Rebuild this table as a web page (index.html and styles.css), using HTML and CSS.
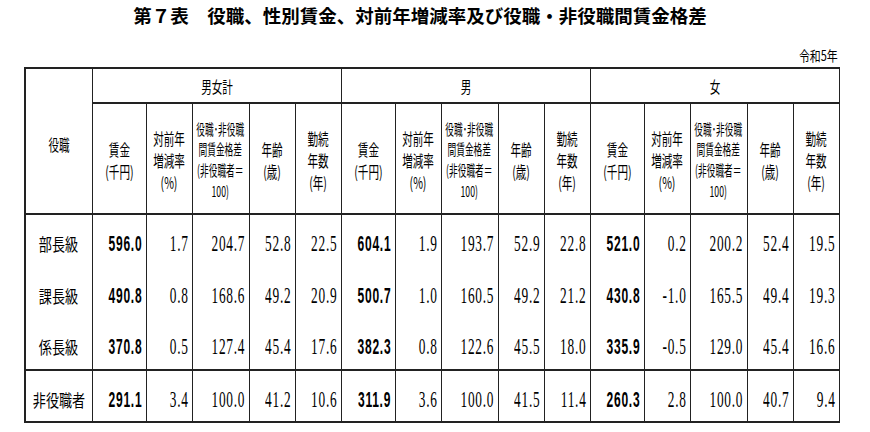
FILE: index.html
```html
<!DOCTYPE html>
<html lang="ja">
<head>
<meta charset="utf-8">
<title>第７表　役職、性別賃金、対前年増減率及び役職・非役職間賃金格差</title>
<link rel="stylesheet" href="styles.css">
</head>
<body>
<div class="page">
  <h1 class="title">第７表　役職、性別賃金、対前年増減率及び役職・非役職間賃金格差</h1>
  <div class="unit"><span>令和5年</span></div>
  <table class="wage">
    <colgroup>
      <col class="c-role">
      <col class="c-w"><col class="c-r"><col class="c-g"><col class="c-a"><col class="c-y">
      <col class="c-w"><col class="c-r"><col class="c-g"><col class="c-a"><col class="c-y">
      <col class="c-w"><col class="c-r"><col class="c-g"><col class="c-a"><col class="c-y">
    </colgroup>
    <thead>
      <tr class="r-group">
        <th rowspan="2" class="role-h"><div class="hc"><span class="sq">役職</span></div></th>
        <th colspan="5"><div class="hc"><span class="sq grp">男女計</span></div></th>
        <th colspan="5"><div class="hc"><span class="sq grp">男</span></div></th>
        <th colspan="5"><div class="hc"><span class="sq grp">女</span></div></th>
      </tr>
      <tr class="r-sub">
        <th><div class="hc"><span class="sq">賃金<br>(千円)</span></div></th>
        <th><div class="hc"><span class="sq">対前年<br>増減率<br>(%)</span></div></th>
        <th><div class="hc"><span class="sq tight">役職･非役職<br>間賃金格差<br>(非役職者＝<br>100)</span></div></th>
        <th><div class="hc"><span class="sq">年齢<br>(歳)</span></div></th>
        <th><div class="hc"><span class="sq">勤続<br>年数<br>(年)</span></div></th>
        <th><div class="hc"><span class="sq">賃金<br>(千円)</span></div></th>
        <th><div class="hc"><span class="sq">対前年<br>増減率<br>(%)</span></div></th>
        <th><div class="hc"><span class="sq tight">役職･非役職<br>間賃金格差<br>(非役職者＝<br>100)</span></div></th>
        <th><div class="hc"><span class="sq">年齢<br>(歳)</span></div></th>
        <th><div class="hc"><span class="sq">勤続<br>年数<br>(年)</span></div></th>
        <th><div class="hc"><span class="sq">賃金<br>(千円)</span></div></th>
        <th><div class="hc"><span class="sq">対前年<br>増減率<br>(%)</span></div></th>
        <th><div class="hc"><span class="sq tight">役職･非役職<br>間賃金格差<br>(非役職者＝<br>100)</span></div></th>
        <th><div class="hc"><span class="sq">年齢<br>(歳)</span></div></th>
        <th><div class="hc"><span class="sq">勤続<br>年数<br>(年)</span></div></th>
      </tr>
    </thead>
    <tbody>
      <tr class="r-data r-first">
        <td class="lab"><div class="hc"><span class="lb">部長級</span></div></td>
        <td><div class="nc"><span class="b">596.0</span></div></td>
        <td><div class="nc"><span class="d">1.7</span></div></td>
        <td><div class="nc"><span class="d">204.7</span></div></td>
        <td><div class="nc"><span class="d">52.8</span></div></td>
        <td><div class="nc"><span class="d">22.5</span></div></td>
        <td><div class="nc"><span class="b">604.1</span></div></td>
        <td><div class="nc"><span class="d">1.9</span></div></td>
        <td><div class="nc"><span class="d">193.7</span></div></td>
        <td><div class="nc"><span class="d">52.9</span></div></td>
        <td><div class="nc"><span class="d">22.8</span></div></td>
        <td><div class="nc"><span class="b">521.0</span></div></td>
        <td><div class="nc"><span class="d">0.2</span></div></td>
        <td><div class="nc"><span class="d">200.2</span></div></td>
        <td><div class="nc"><span class="d">52.4</span></div></td>
        <td><div class="nc"><span class="d">19.5</span></div></td>
      </tr>
      <tr class="r-data">
        <td class="lab"><div class="hc"><span class="lb">課長級</span></div></td>
        <td><div class="nc"><span class="b">490.8</span></div></td>
        <td><div class="nc"><span class="d">0.8</span></div></td>
        <td><div class="nc"><span class="d">168.6</span></div></td>
        <td><div class="nc"><span class="d">49.2</span></div></td>
        <td><div class="nc"><span class="d">20.9</span></div></td>
        <td><div class="nc"><span class="b">500.7</span></div></td>
        <td><div class="nc"><span class="d">1.0</span></div></td>
        <td><div class="nc"><span class="d">160.5</span></div></td>
        <td><div class="nc"><span class="d">49.2</span></div></td>
        <td><div class="nc"><span class="d">21.2</span></div></td>
        <td><div class="nc"><span class="b">430.8</span></div></td>
        <td><div class="nc"><span class="d">-1.0</span></div></td>
        <td><div class="nc"><span class="d">165.5</span></div></td>
        <td><div class="nc"><span class="d">49.4</span></div></td>
        <td><div class="nc"><span class="d">19.3</span></div></td>
      </tr>
      <tr class="r-data">
        <td class="lab"><div class="hc"><span class="lb">係長級</span></div></td>
        <td><div class="nc"><span class="b">370.8</span></div></td>
        <td><div class="nc"><span class="d">0.5</span></div></td>
        <td><div class="nc"><span class="d">127.4</span></div></td>
        <td><div class="nc"><span class="d">45.4</span></div></td>
        <td><div class="nc"><span class="d">17.6</span></div></td>
        <td><div class="nc"><span class="b">382.3</span></div></td>
        <td><div class="nc"><span class="d">0.8</span></div></td>
        <td><div class="nc"><span class="d">122.6</span></div></td>
        <td><div class="nc"><span class="d">45.5</span></div></td>
        <td><div class="nc"><span class="d">18.0</span></div></td>
        <td><div class="nc"><span class="b">335.9</span></div></td>
        <td><div class="nc"><span class="d">-0.5</span></div></td>
        <td><div class="nc"><span class="d">129.0</span></div></td>
        <td><div class="nc"><span class="d">45.4</span></div></td>
        <td><div class="nc"><span class="d">16.6</span></div></td>
      </tr>
      <tr class="r-data r-last">
        <td class="lab"><div class="hc"><span class="lb">非役職者</span></div></td>
        <td><div class="nc"><span class="b">291.1</span></div></td>
        <td><div class="nc"><span class="d">3.4</span></div></td>
        <td><div class="nc"><span class="d">100.0</span></div></td>
        <td><div class="nc"><span class="d">41.2</span></div></td>
        <td><div class="nc"><span class="d">10.6</span></div></td>
        <td><div class="nc"><span class="b">311.9</span></div></td>
        <td><div class="nc"><span class="d">3.6</span></div></td>
        <td><div class="nc"><span class="d">100.0</span></div></td>
        <td><div class="nc"><span class="d">41.5</span></div></td>
        <td><div class="nc"><span class="d">11.4</span></div></td>
        <td><div class="nc"><span class="b">260.3</span></div></td>
        <td><div class="nc"><span class="d">2.8</span></div></td>
        <td><div class="nc"><span class="d">100.0</span></div></td>
        <td><div class="nc"><span class="d">40.7</span></div></td>
        <td><div class="nc"><span class="d">9.4</span></div></td>
      </tr>
    </tbody>
  </table>
</div>
</body>
</html>
```
FILE: styles.css
```css
html, body {
  margin: 0;
  padding: 0;
  background: #fff;
  color: #000;
  font-family: "Noto Sans CJK JP", sans-serif;
}

.page {
  width: 818px;
  padding: 0 28px 0 24px;
}

.title {
  margin: 0;
  height: 31px;
  line-height: 31px;
  font-size: 18.5px;
  font-weight: 700;
  text-align: center;
  padding-right: 26px;
  white-space: nowrap;
}

.unit {
  height: 36px;
  box-sizing: border-box;
  display: flex;
  justify-content: flex-end;
  align-items: flex-end;
  padding-right: 4px;
  padding-bottom: 4px;
}

.unit span {
  display: inline-block;
  font-size: 14px;
  line-height: 16px;
  transform: scaleX(0.78);
  transform-origin: right center;
}

.wage {
  border-collapse: collapse;
  table-layout: fixed;
  width: 815px;
  border-left: 2px solid #222;
  border-top: 2px solid #222;
  border-bottom: 2px solid #222;
}

.c-role { width: 67px; }
.c-w { width: 54px; }
.c-r { width: 46px; }
.c-g { width: 57px; }
.c-a { width: 46px; }
.c-y { width: 46px; }

.wage th,
.wage td {
  padding: 0;
  font-weight: 400;
  vertical-align: middle;
  border-left: 1px solid #222;
  border-right: 1px solid #222;
}

.r-group { height: 35px; }
.r-group th { border-top: 2px solid #222; }
.r-sub { height: 111px; }
.r-sub th { border-top: 2px solid #222; }
.r-data { height: 52px; }
.r-first td { border-top: 2px solid #222; }
.r-last td { border-top: 2px solid #222; border-bottom: 2px solid #222; }

.hc {
  display: flex;
  justify-content: center;
}

.r-sub .hc { padding-top: 3px; }
.role-h .hc { padding-top: 6px; }

.sq {
  display: inline-block;
  white-space: nowrap;
  text-align: center;
  font-size: 16px;
  line-height: 22px;
  transform: scaleX(0.66);
}

.sq.grp { transform: scaleX(0.66); }

.sq.tight {
  font-size: 15px;
  line-height: 20.7px;
  transform: scaleX(0.58);
}

.lab .hc { padding-top: 7px; }

.lb {
  display: inline-block;
  white-space: nowrap;
  font-size: 17px;
  line-height: 20px;
  transform: scaleX(0.77);
}

.nc {
  display: flex;
  justify-content: flex-end;
  padding-right: 3px;
  padding-top: 7px;
}

.nc span {
  display: inline-block;
  white-space: nowrap;
  line-height: 20px;
  letter-spacing: 1.3px;
  transform-origin: right center;
}

.nc .d {
  font-family: "Liberation Serif", serif;
  font-size: 23px;
  transform: scaleX(0.58);
}

.nc .b {
  font-family: "Liberation Sans", sans-serif;
  font-weight: 700;
  font-size: 21.5px;
  transform: scaleX(0.56);
}
```
